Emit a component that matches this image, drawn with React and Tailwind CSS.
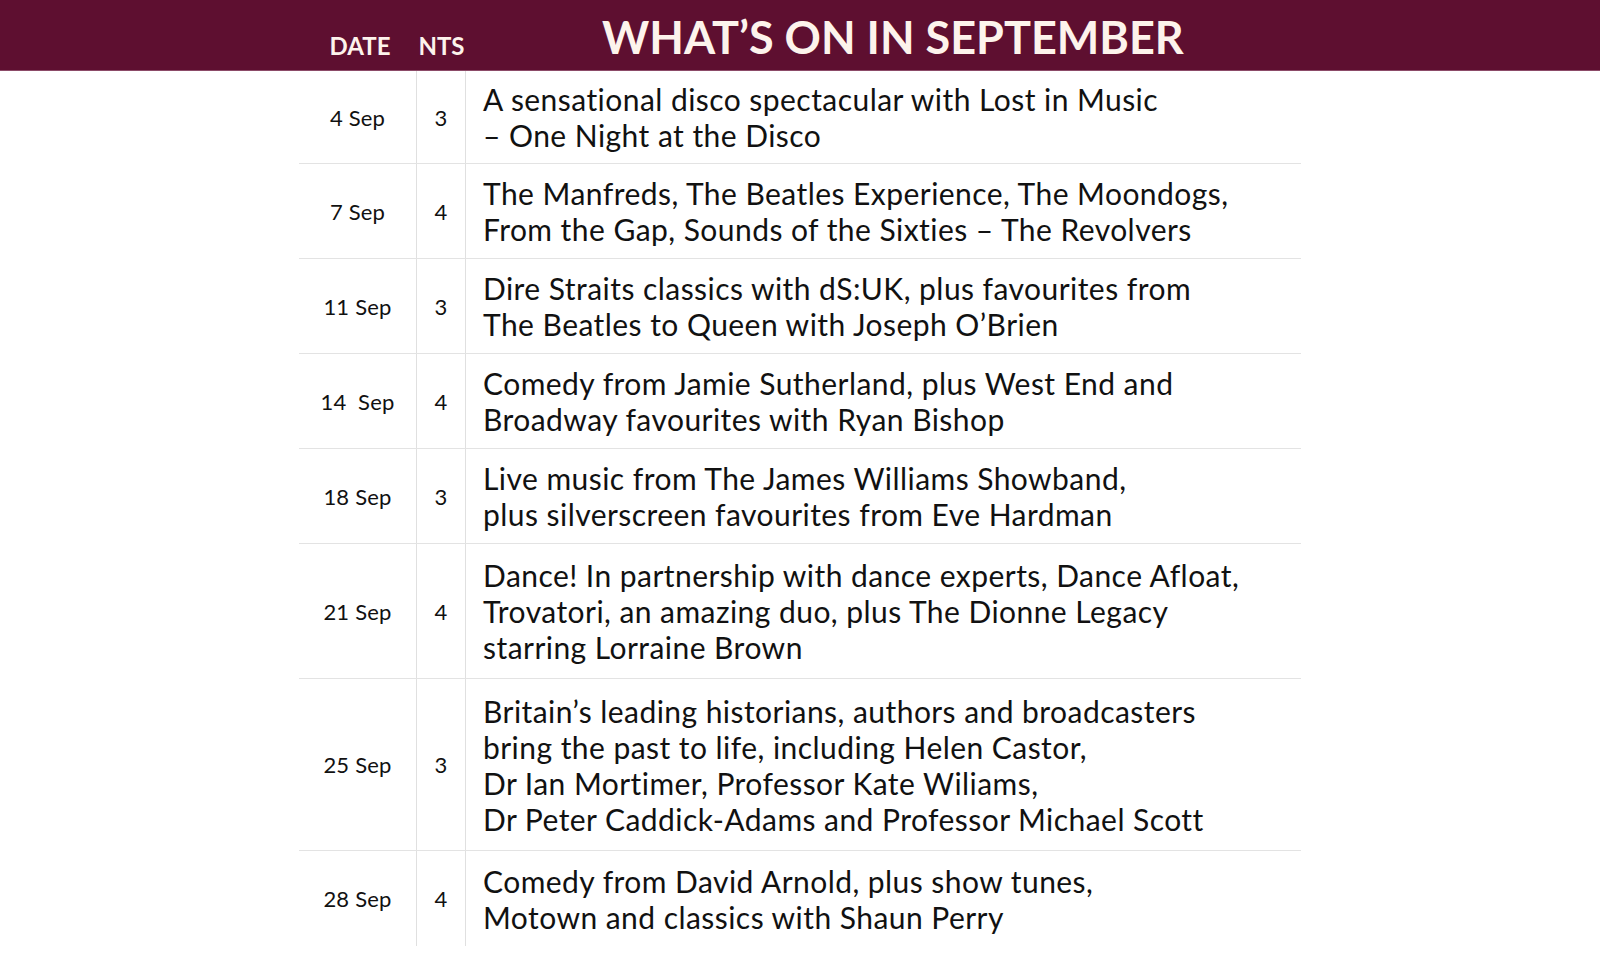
import React from 'react';

const ROWS = [
  { date: '4 Sep', nts: 3, h: 'h-[93px]', lines: ['A sensational disco spectacular with Lost in Music', '– One Night at the Disco'] },
  { date: '7 Sep', nts: 4, h: 'h-[95px]', lines: ['The Manfreds, The Beatles Experience, The Moondogs,', 'From the Gap, Sounds of the Sixties – The Revolvers'] },
  { date: '11 Sep', nts: 3, h: 'h-[95px]', lines: ['Dire Straits classics with dS:UK, plus favourites from', 'The Beatles to Queen with Joseph O’Brien'] },
  { date: '14  Sep', nts: 4, h: 'h-[95px]', lines: ['Comedy from Jamie Sutherland, plus West End and', 'Broadway favourites with Ryan Bishop'] },
  { date: '18 Sep', nts: 3, h: 'h-[95px]', lines: ['Live music from The James Williams Showband,', 'plus silverscreen favourites from Eve Hardman'] },
  { date: '21 Sep', nts: 4, h: 'h-[135px]', lines: ['Dance! In partnership with dance experts, Dance Afloat,', 'Trovatori, an amazing duo, plus The Dionne Legacy', 'starring Lorraine Brown'] },
  { date: '25 Sep', nts: 3, h: 'h-[172px]', lines: ['Britain’s leading historians, authors and broadcasters', 'bring the past to life, including Helen Castor,', 'Dr Ian Mortimer, Professor Kate Wiliams,', 'Dr Peter Caddick-Adams and Professor Michael Scott'] },
  { date: '28 Sep', nts: 4, h: 'h-[95px]', lines: ['Comedy from David Arnold, plus show tunes,', 'Motown and classics with Shaun Perry'] },
];

export default function App() {
  return (
    <div className="min-h-screen bg-white text-[#111] font-['Lato','Open_Sans',sans-serif]">
      {/* Header bar */}
      <div className="h-[71px] bg-[#5e0f30] border-b border-[#8c4b68]">
        <div className="mx-auto w-[1002px] h-full flex items-end text-[#fdf3ec] font-bold">
          <div className="w-[118px] text-center text-[24px] leading-none pb-[12px] pl-[4px]">DATE</div>
          <div className="w-[49px] text-center text-[24px] leading-none pb-[12px]">NTS</div>
          <div className="pl-[136px] text-[45px] leading-none pb-[10px]">WHAT’S ON IN SEPTEMBER</div>
        </div>
      </div>

      {/* Table */}
      <div className="mx-auto w-[1002px]">
        {ROWS.map((row, i) => (
          <div
            key={row.date}
            className={`grid grid-cols-[118px_49px_1fr] ${row.h} ${i < ROWS.length - 1 ? 'border-b border-[#e3e3e3]' : ''}`}
          >
            <div className="flex items-center justify-center border-r border-[#e0e0e0] text-[22px] tracking-[0.2px] whitespace-pre">
              {row.date}
            </div>
            <div className="flex items-center justify-center border-r border-[#e0e0e0] text-[22px]">
              {row.nts}
            </div>
            <div className="flex flex-col justify-center pl-[17px] text-[30px] leading-[36px] tracking-[0.45px]">
              {row.lines.map((l) => (
                <div key={l} className="whitespace-nowrap">{l}</div>
              ))}
            </div>
          </div>
        ))}
      </div>
    </div>
  );
}
